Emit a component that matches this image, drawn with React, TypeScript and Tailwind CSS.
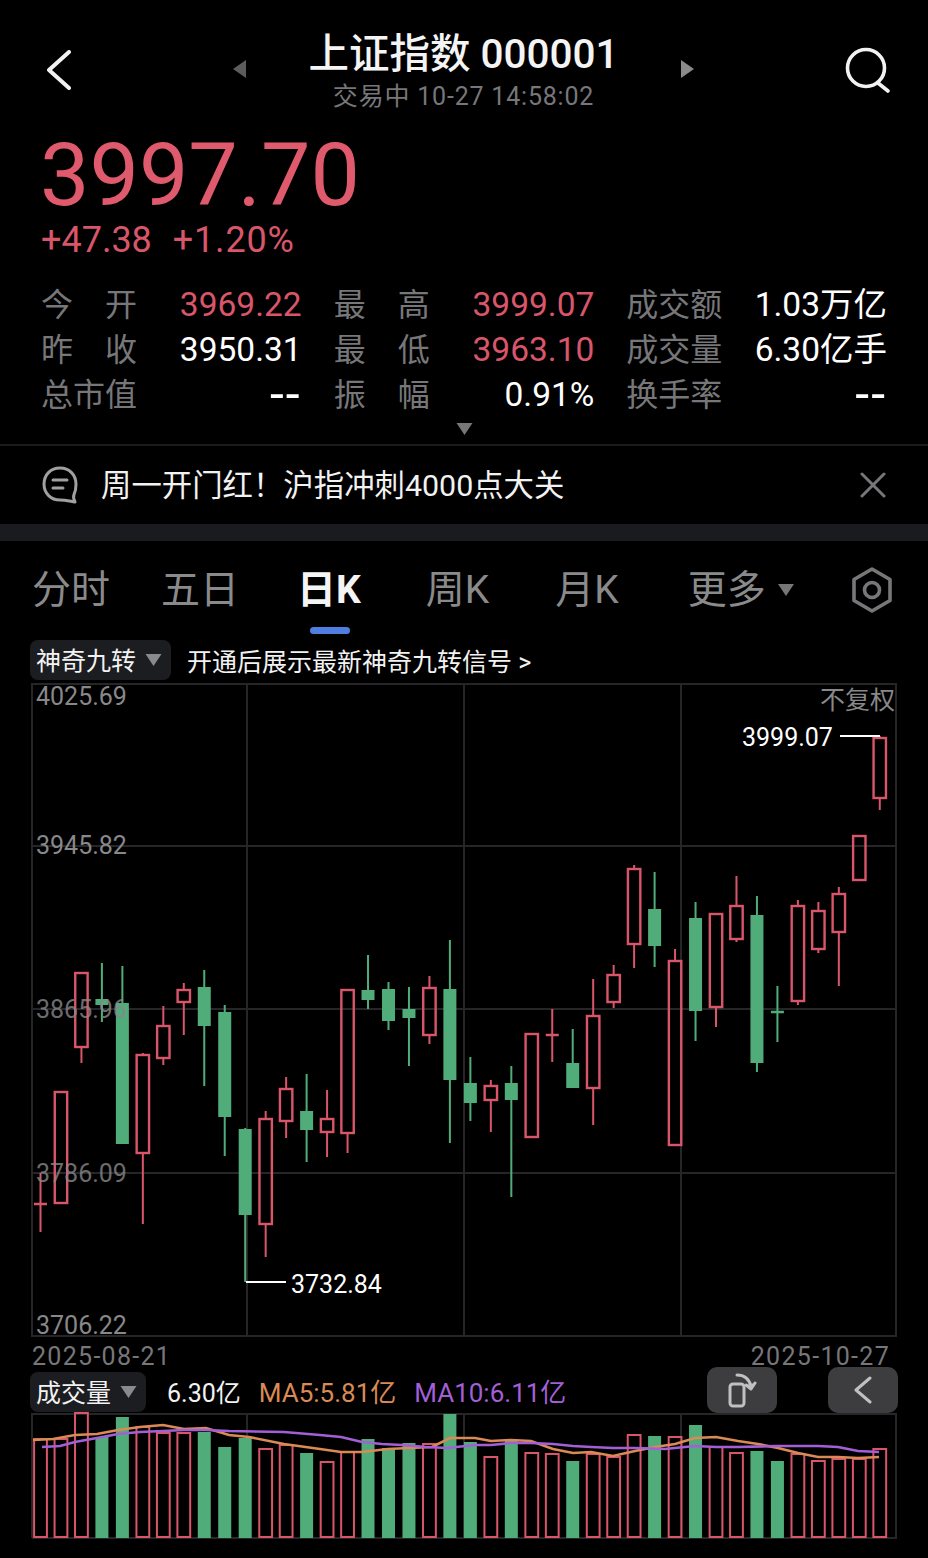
import { ReactNode } from "react";

const RED = "#d9566a";
const GREEN = "#50ad7a";
const FONT = { fontFamily: '"Roboto", "Noto Sans CJK SC", sans-serif' };

// [up, wickTop, bodyTop, bodyBottom, wickBottom, volumeTop]
type Candle = [boolean, number, number, number, number, number];

const candles: Candle[] = [
  [true, 1173, 1204, 1205, 1232, 1439],
  [true, 1092, 1092, 1203, 1203, 1439],
  [true, 973, 973, 1047, 1063, 1413],
  [false, 963, 999, 1005, 1022, 1437],
  [false, 966, 1003, 1144, 1144, 1417],
  [true, 1053, 1055, 1153, 1224, 1427],
  [true, 1006, 1026, 1058, 1065, 1433],
  [true, 983, 990, 1002, 1035, 1433],
  [false, 970, 987, 1026, 1086, 1432],
  [false, 1005, 1012, 1117, 1156, 1447],
  [false, 1128, 1129, 1215, 1282, 1438],
  [true, 1111, 1119, 1224, 1257, 1449],
  [true, 1077, 1089, 1121, 1138, 1445],
  [false, 1074, 1111, 1130, 1162, 1453],
  [true, 1090, 1119, 1132, 1157, 1462],
  [true, 990, 990, 1133, 1153, 1452],
  [false, 955, 990, 1000, 1009, 1439],
  [false, 982, 989, 1021, 1030, 1448],
  [false, 987, 1009, 1018, 1066, 1443],
  [true, 976, 988, 1035, 1044, 1444],
  [false, 940, 989, 1080, 1143, 1414],
  [false, 1057, 1083, 1103, 1121, 1442],
  [true, 1080, 1086, 1100, 1132, 1457],
  [false, 1066, 1083, 1100, 1197, 1440],
  [true, 1033, 1034, 1137, 1137, 1453],
  [true, 1009, 1035, 1036, 1062, 1454],
  [false, 1029, 1063, 1088, 1088, 1461],
  [true, 979, 1016, 1088, 1125, 1454],
  [true, 965, 975, 1002, 1008, 1457],
  [true, 865, 869, 944, 968, 1435],
  [false, 872, 909, 946, 967, 1436],
  [true, 949, 961, 1145, 1145, 1437],
  [false, 902, 918, 1011, 1041, 1425],
  [true, 914, 914, 1007, 1027, 1447],
  [true, 876, 906, 939, 942, 1453],
  [false, 896, 915, 1063, 1072, 1451],
  [false, 986, 1012, 1013, 1042, 1461],
  [true, 900, 906, 1001, 1005, 1454],
  [true, 902, 911, 949, 953, 1461],
  [true, 887, 894, 932, 986, 1459],
  [true, 836, 836, 880, 880, 1459],
  [true, 736, 738, 798, 810, 1449],
];

const ma5 =
  "33,1440 53,1439 75,1435 97,1434 118,1430 140,1427 163,1425 184,1429 206,1428 229,1435 249,1437 284,1444 320,1449 341,1452 362,1452 388,1449 409,1448 432,1447 450,1438 475,1438 491,1441 511,1440 531,1441 553,1449 573,1453 591,1452 613,1456 635,1451 655,1447 675,1444 695,1438 716,1437 738,1441 758,1444 778,1448 798,1453 818,1457 838,1457 858,1458 879,1457";
const ma10 =
  "42,1447 60,1446 75,1442 97,1438 118,1434 140,1432 163,1431 184,1430 206,1430 229,1431 284,1432 320,1435 341,1437 362,1442 382,1444 402,1445 426,1447 447,1448 475,1445 491,1445 511,1443 531,1443 553,1444 573,1446 591,1447 613,1448 635,1448 665,1449 695,1446 716,1447 738,1447 778,1446 818,1446 838,1447 858,1451 879,1452";

const stats: [string, string, string][] = [
  ["今 开", "3969.22", "text-[#d9566a]"],
  ["最 高", "3999.07", "text-[#d9566a]"],
  ["成交额", "1.03万亿", "text-white"],
  ["昨 收", "3950.31", "text-white"],
  ["最 低", "3963.10", "text-[#d9566a]"],
  ["成交量", "6.30亿手", "text-white"],
  ["总市值", "--", "text-[50px] tracking-[2px] text-white"],
  ["振 幅", "0.91%", "text-white"],
  ["换手率", "--", "text-[50px] tracking-[2px] text-white"],
];

function Caret({ className }: { className: string }) {
  return (
    <svg viewBox="0 0 16 12" className={className}>
      <path d="M0 0H16L8 12Z" fill="currentColor" />
    </svg>
  );
}

function ChartLabel({ className, children }: { className: string; children: ReactNode }) {
  return (
    <span className={`absolute text-[25px] leading-[30px] ${className}`}>{children}</span>
  );
}

function Candles() {
  return (
    <svg viewBox="30 682 868 656" className="block h-[656px] w-[868px]">
      <g stroke="#262628" strokeWidth="2" fill="none">
        <rect x="32" y="684" width="864" height="652" />
        <path d="M247 684V1336M464 684V1336M681 684V1336M32 846H896M32 1009H896M32 1173H896" />
      </g>
      {candles.map(([up, wt, bt, bb, wb], i) => {
        const x = 40.5 + i * 20.47;
        const color = up ? RED : GREEN;
        const doji = bb - bt < 3;
        return (
          <g key={i}>
            <path d={`M${x} ${wt}V${bt}M${x} ${bb}V${wb}`} stroke={color} strokeWidth="2" />
            {doji ? (
              <path d={`M${x - 6.5} ${bt}H${x + 6.5}`} stroke={color} strokeWidth="2.5" />
            ) : up ? (
              <rect x={x - 6.2} y={bt} width="12.4" height={bb - bt} fill="none" stroke={color} strokeWidth="2.4" />
            ) : (
              <rect x={x - 6.5} y={bt} width="13" height={bb - bt} fill={color} />
            )}
          </g>
        );
      })}
      <path d="M246 1282H286M840 736H880" stroke="#fff" strokeWidth="2" />
    </svg>
  );
}

function Volumes() {
  return (
    <svg viewBox="30 1412 868 128" className="block h-[128px] w-[868px]">
      <g stroke="#262628" strokeWidth="2" fill="none">
        <path d="M32 1538V1414H896V1538H32M247 1414V1538M464 1414V1538M681 1414V1538" />
      </g>
      {candles.map(([up, , , , , top], i) => {
        const x = 40.5 + i * 20.47;
        return up ? (
          <rect key={i} x={x - 6.4} y={top} width="12.8" height={1537 - top} fill="none" stroke={RED} strokeWidth="2" />
        ) : (
          <rect key={i} x={x - 6.5} y={top} width="13" height={1538 - top} fill={GREEN} />
        );
      })}
      <polyline points={ma5} fill="none" stroke="#d98a55" strokeWidth="2.6" />
      <polyline points={ma10} fill="none" stroke="#a25fd6" strokeWidth="2.6" />
    </svg>
  );
}

export default function App() {
  return (
    <div className="h-[1558px] w-[928px] overflow-hidden bg-black" style={FONT}>
      <header className="flex h-[130px] items-start">
        <svg viewBox="0 0 24 40" className="mt-[50px] ml-[47px] h-[40px] w-[24px]" fill="none" stroke="#f2f2f2" strokeWidth="4" strokeLinecap="round" strokeLinejoin="round">
          <path d="M22 2L2 20L22 38" />
        </svg>
        <svg viewBox="0 0 13 18" className="mt-[60px] ml-[162px] h-[18px] w-[13px]">
          <path d="M13 0V18L0 9Z" fill="#5c5c5e" />
        </svg>
        <div className="flex-1 pt-[30px] text-center">
          <div className="text-[40.5px] leading-[48px] font-medium text-[#f4f4f4]">上证指数 000001</div>
          <div className="mt-[4px] text-[25px] leading-[30px] tracking-[0.8px] text-[#77777a]">交易中 10-27 14:58:02</div>
        </div>
        <svg viewBox="0 0 13 18" className="mt-[60px] h-[18px] w-[13px]">
          <path d="M0 0V18L13 9Z" fill="#8a8a8c" />
        </svg>
        <svg viewBox="0 0 46 46" className="mt-[47px] mr-[37px] ml-[151px] h-[46px] w-[46px]" fill="none" stroke="#f2f2f2" strokeWidth="3.6" strokeLinecap="round">
          <circle cx="21" cy="21" r="18.5" />
          <path d="M33 36L43 44" />
        </svg>
      </header>

      <div className="h-[90px] pl-[40px] text-[88px] leading-[90px] text-[#e05a6e]">3997.70</div>
      <div className="flex h-[40px] items-center gap-[21px] pl-[41px] text-[36px] leading-[40px] text-[#d9566a]">
        <span>+47.38</span>
        <span className="tracking-[0.8px]">+1.20%</span>
      </div>

      <div className="mt-[22px] ml-[41px] grid w-[846px] grid-cols-3 gap-x-[32px]">
        {stats.map(([label, value, color]) => (
          <div key={label} className="flex h-[45px] items-center justify-between text-[32px] leading-[45px]">
            <span className="flex w-[96px] justify-between pt-[1px] text-[#77777a]">
              {label.includes(" ") ? label.split(" ").map((c) => <span key={c}>{c}</span>) : label}
            </span>
            <span className={`text-[33.5px] ${color}`}>{value}</span>
          </div>
        ))}
      </div>

      <div className="flex h-[27px] justify-center pt-[6px]">
        <Caret className="h-[12px] w-[17px] text-[#77777a]" />
      </div>

      <div className="flex h-[80px] items-center border-t-2 border-[#1c1c1e] pl-[42px]">
        <svg viewBox="0 0 36 38" className="h-[38px] w-[36px]" fill="none" stroke="#a0a0a2" strokeWidth="3" strokeLinecap="round" strokeLinejoin="round">
          <path d="M18 2C8.5 2 2 9 2 18C2 27.5 9 34 18 34C23 34 27 35 33 36C31.5 33 31 31 32 28.5C33.5 25.5 34 22 34 18C34 9 27.5 2 18 2Z" />
          <path d="M11 14H25M11 22H21" />
        </svg>
        <span className="ml-[23px] pt-[2px] text-[30.4px] text-[#f2f2f2]">周一开门红！沪指冲刺4000点大关</span>
        <svg viewBox="0 0 26 26" className="mr-[42px] ml-auto h-[26px] w-[26px]" fill="none" stroke="#77777a" strokeWidth="3" strokeLinecap="round">
          <path d="M2 2L24 24M24 2L2 24" />
        </svg>
      </div>
      <div className="h-[17px] bg-[#1a1b1e]" />

      <nav className="flex h-[99px] items-start pt-[25px] text-[39px] leading-[48px] text-[#8a8a8c]">
        <span className="ml-[32px]">分时</span>
        <span className="ml-[51px]">五日</span>
        <span className="relative ml-[58px] font-bold text-[#f4f4f4]">
          日K
          <span className="absolute top-[61px] left-[13px] h-[7px] w-[40px] rounded-full bg-[#4f7ee0]" />
        </span>
        <span className="ml-[65px]">周K</span>
        <span className="ml-[66px]">月K</span>
        <span className="ml-[69px] flex items-center">
          更多
          <Caret className="ml-[11px] h-[12px] w-[18px] text-[#77777a]" />
        </span>
        <svg viewBox="0 0 42 46" className="mt-[1px] ml-[56px] h-[46px] w-[42px]" fill="none" stroke="#77777a" strokeWidth="3.6" strokeLinejoin="round">
          <path d="M21 2L39 12.5V33.5L21 44L3 33.5V12.5Z" />
          <circle cx="21" cy="23" r="7.5" />
        </svg>
      </nav>

      <div className="ml-[30px] flex h-[42px] items-start">
        <div className="flex h-[40px] w-[141px] items-center rounded-[8px] bg-[#1c1d20] pl-[6px] text-[25px] text-[#f2f2f2]">
          <span className="pt-[4px]">神奇九转</span>
          <Caret className="ml-[9px] h-[12px] w-[17px] text-[#8a8a8c]" />
        </div>
        <span className="ml-[16px] pt-[3px] text-[25px] leading-[40px] text-[#f2f2f2]">开通后展示最新神奇九转信号 &gt;</span>
      </div>

      <div className="relative ml-[30px] h-[656px] w-[868px] text-[#88888a]">
        <Candles />
        <ChartLabel className="top-0 left-[6px]">4025.69</ChartLabel>
        <ChartLabel className="top-[149px] left-[6px]">3945.82</ChartLabel>
        <ChartLabel className="top-[313px] left-[6px] opacity-80">3865.96</ChartLabel>
        <ChartLabel className="top-[477px] left-[6px] opacity-80">3786.09</ChartLabel>
        <ChartLabel className="top-[629px] left-[6px]">3706.22</ChartLabel>
        <ChartLabel className="top-[4px] right-[3px]">不复权</ChartLabel>
        <ChartLabel className="top-[41px] left-[712px] text-white">3999.07</ChartLabel>
        <ChartLabel className="top-[588px] left-[261px] text-white">3732.84</ChartLabel>
      </div>

      <div className="relative mx-[32px] flex h-[34px] items-center justify-between pt-[3px] pr-[6px] text-[25px] tracking-[1.3px] text-[#77777a]">
        <span>2025-08-21</span>
        <span>2025-10-27</span>
      </div>

      <div className="relative ml-[30px] flex h-[40px] w-[868px] items-center text-[25px]">
        <div className="flex h-[40px] w-[116px] items-center rounded-[8px] bg-[#1c1d20] pl-[6px] text-[#f2f2f2]">
          <span className="pt-[3px]">成交量</span>
          <Caret className="ml-[9px] h-[12px] w-[17px] text-[#8a8a8c]" />
        </div>
        <span className="ml-[21px] pt-[3px] text-[#f2f2f2]">6.30亿</span>
        <span className="ml-[18px] pt-[3px] text-[26px] text-[#d98a55]">MA5:5.81亿</span>
        <span className="ml-[18px] pt-[3px] text-[26px] text-[#a25fd6]">MA10:6.11亿</span>
        <button className="absolute top-[-5px] left-[677px] flex h-[46px] w-[70px] items-center justify-center rounded-[10px] bg-[#3d3d40]">
          <svg viewBox="0 0 30 36" className="h-[36px] w-[30px]" fill="none" stroke="#c0c0c2" strokeWidth="3" strokeLinecap="round" strokeLinejoin="round">
            <rect x="3" y="12" width="14" height="22" rx="3" />
            <path d="M10 3C17 3 22 7 24 14" />
            <path d="M19 13L24 17L28 11" fill="#c0c0c2" />
          </svg>
        </button>
        <button className="absolute top-[-5px] right-0 flex h-[46px] w-[70px] items-center justify-center rounded-[10px] bg-[#3d3d40]">
          <svg viewBox="0 0 18 28" className="h-[28px] w-[18px]" fill="none" stroke="#c0c0c2" strokeWidth="3" strokeLinecap="round" strokeLinejoin="round">
            <path d="M16 2L2 14L16 26" />
          </svg>
        </button>
      </div>

      <div className="ml-[30px]">
        <Volumes />
      </div>
    </div>
  );
}
